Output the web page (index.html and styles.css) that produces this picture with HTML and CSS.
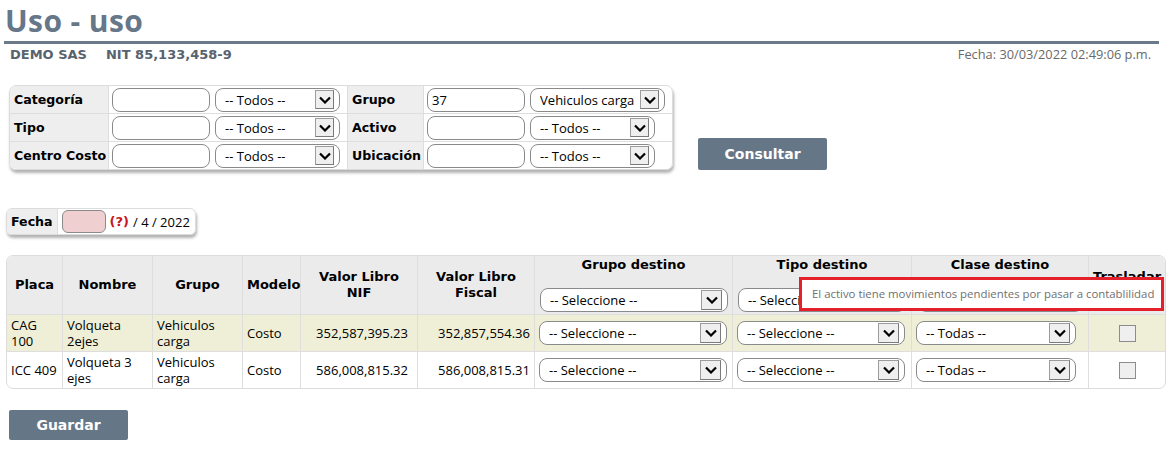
FILE: index.html
```html
<!DOCTYPE html>
<html lang="es">
<head>
<meta charset="utf-8">
<title>Uso - uso</title>
<link rel="stylesheet" href="styles.css">
</head>
<body>
<div class="page">
  <header class="head">
    <h1 class="title">Uso - uso</h1>
  </header>
  <div class="sub">
    <span class="company">DEMO SAS</span>
    <span class="nit">NIT 85,133,458-9</span>
    <span class="date">Fecha: 30/03/2022 02:49:06 p.m.</span>
  </div>

  <section class="filters">
    <table class="filter-box">
      <tr>
        <td class="lbl first">Categoría</td>
        <td class="fld"><div class="fld-in"><span class="txt"></span><span class="sel w125"><span class="val">-- Todos --</span><span class="arr"><svg viewBox="0 0 12 8" width="12" height="8"><path d="M1 1.5 L6 6.5 L11 1.5" fill="none" stroke="#000" stroke-width="2.2"/></svg></span></span></div></td>
        <td class="lbl second">Grupo</td>
        <td class="fld"><div class="fld-in"><span class="txt">37</span><span class="sel w135"><span class="val">Vehiculos carga</span><span class="arr"><svg viewBox="0 0 12 8" width="12" height="8"><path d="M1 1.5 L6 6.5 L11 1.5" fill="none" stroke="#000" stroke-width="2.2"/></svg></span></span></div></td>
      </tr>
      <tr>
        <td class="lbl first">Tipo</td>
        <td class="fld"><div class="fld-in"><span class="txt"></span><span class="sel w125"><span class="val">-- Todos --</span><span class="arr"><svg viewBox="0 0 12 8" width="12" height="8"><path d="M1 1.5 L6 6.5 L11 1.5" fill="none" stroke="#000" stroke-width="2.2"/></svg></span></span></div></td>
        <td class="lbl second">Activo</td>
        <td class="fld"><div class="fld-in"><span class="txt"></span><span class="sel w125"><span class="val">-- Todos --</span><span class="arr"><svg viewBox="0 0 12 8" width="12" height="8"><path d="M1 1.5 L6 6.5 L11 1.5" fill="none" stroke="#000" stroke-width="2.2"/></svg></span></span></div></td>
      </tr>
      <tr>
        <td class="lbl first">Centro Costo</td>
        <td class="fld"><div class="fld-in"><span class="txt"></span><span class="sel w125"><span class="val">-- Todos --</span><span class="arr"><svg viewBox="0 0 12 8" width="12" height="8"><path d="M1 1.5 L6 6.5 L11 1.5" fill="none" stroke="#000" stroke-width="2.2"/></svg></span></span></div></td>
        <td class="lbl second">Ubicación</td>
        <td class="fld"><div class="fld-in"><span class="txt"></span><span class="sel w125"><span class="val">-- Todos --</span><span class="arr"><svg viewBox="0 0 12 8" width="12" height="8"><path d="M1 1.5 L6 6.5 L11 1.5" fill="none" stroke="#000" stroke-width="2.2"/></svg></span></span></div></td>
      </tr>
    </table>
    <button class="btn consult" type="button">Consultar</button>
  </section>

  <div class="fecha-box">
    <span class="fecha-lbl">Fecha</span>
    <span class="day"></span>
    <span class="q">(?)</span>
    <span class="rest">/ 4 / 2022</span>
  </div>

  <div class="grid-wrap">
    <table class="grid">
      <colgroup>
        <col class="c-placa"><col class="c-nombre"><col class="c-grupo"><col class="c-modelo"><col class="c-nif"><col class="c-fiscal"><col class="c-gdest"><col class="c-tdest"><col class="c-cdest"><col class="c-tras">
      </colgroup>
      <thead>
        <tr class="hrow">
          <th>Placa</th>
          <th>Nombre</th>
          <th>Grupo</th>
          <th>Modelo</th>
          <th>Valor Libro<br>NIF</th>
          <th>Valor Libro<br>Fiscal</th>
          <th class="dest"><div class="th-title">Grupo destino</div><span class="sel big w188"><span class="val">-- Seleccione --</span><span class="arr"><svg viewBox="0 0 12 8" width="12" height="8"><path d="M1 1.5 L6 6.5 L11 1.5" fill="none" stroke="#000" stroke-width="2.2"/></svg></span></span></th>
          <th class="dest"><div class="th-title">Tipo destino</div><span class="sel big w168"><span class="val">-- Seleccione --</span><span class="arr"><svg viewBox="0 0 12 8" width="12" height="8"><path d="M1 1.5 L6 6.5 L11 1.5" fill="none" stroke="#000" stroke-width="2.2"/></svg></span></span></th>
          <th class="dest"><div class="th-title">Clase destino</div><span class="sel big w165"><span class="val">-- Todas --</span><span class="arr"><svg viewBox="0 0 12 8" width="12" height="8"><path d="M1 1.5 L6 6.5 L11 1.5" fill="none" stroke="#000" stroke-width="2.2"/></svg></span></span></th>
          <th class="tras"><div class="th-title">Trasladar</div><span class="cb"></span></th>
        </tr>
      </thead>
      <tbody>
        <tr class="hl">
          <td>CAG 100</td>
          <td>Volqueta 2ejes</td>
          <td>Vehiculos carga</td>
          <td>Costo</td>
          <td class="num nif">352,587,395.23</td>
          <td class="num">352,857,554.36</td>
          <td class="selcell"><span class="sel big w188"><span class="val">-- Seleccione --</span><span class="arr"><svg viewBox="0 0 12 8" width="12" height="8"><path d="M1 1.5 L6 6.5 L11 1.5" fill="none" stroke="#000" stroke-width="2.2"/></svg></span></span></td>
          <td class="selcell"><span class="sel big w168"><span class="val">-- Seleccione --</span><span class="arr"><svg viewBox="0 0 12 8" width="12" height="8"><path d="M1 1.5 L6 6.5 L11 1.5" fill="none" stroke="#000" stroke-width="2.2"/></svg></span></span></td>
          <td class="selcell"><span class="sel big w160"><span class="val">-- Todas --</span><span class="arr"><svg viewBox="0 0 12 8" width="12" height="8"><path d="M1 1.5 L6 6.5 L11 1.5" fill="none" stroke="#000" stroke-width="2.2"/></svg></span></span></td>
          <td class="chk"><span class="cb"></span></td>
        </tr>
        <tr>
          <td>ICC 409</td>
          <td>Volqueta 3 ejes</td>
          <td>Vehiculos carga</td>
          <td>Costo</td>
          <td class="num nif">586,008,815.32</td>
          <td class="num">586,008,815.31</td>
          <td class="selcell"><span class="sel big w188"><span class="val">-- Seleccione --</span><span class="arr"><svg viewBox="0 0 12 8" width="12" height="8"><path d="M1 1.5 L6 6.5 L11 1.5" fill="none" stroke="#000" stroke-width="2.2"/></svg></span></span></td>
          <td class="selcell"><span class="sel big w168"><span class="val">-- Seleccione --</span><span class="arr"><svg viewBox="0 0 12 8" width="12" height="8"><path d="M1 1.5 L6 6.5 L11 1.5" fill="none" stroke="#000" stroke-width="2.2"/></svg></span></span></td>
          <td class="selcell"><span class="sel big w160"><span class="val">-- Todas --</span><span class="arr"><svg viewBox="0 0 12 8" width="12" height="8"><path d="M1 1.5 L6 6.5 L11 1.5" fill="none" stroke="#000" stroke-width="2.2"/></svg></span></span></td>
          <td class="chk"><span class="cb"></span></td>
        </tr>
      </tbody>
    </table>
    <div class="tooltip">El activo tiene movimientos pendientes por pasar a contablilidad</div>
  </div>

  <button class="btn save" type="button">Guardar</button>
</div>
</body>
</html>
```
FILE: styles.css
```css
* { box-sizing: border-box; }

body {
  margin: 0;
  background: #fff;
  color: #000;
  font-family: "Open Sans", "Liberation Sans", sans-serif;
  font-size: 13px;
}

.page {
  width: 1173px;
}

/* ---------- header ---------- */
.head {
  margin: 0 14px 0 4px;
  border-bottom: 3px solid #6b7a89;
}

.title {
  margin: 0;
  padding: 0 0 0 1px;
  font-family: "Open Sans", sans-serif;
  font-weight: bold;
  font-size: 30px;
  letter-spacing: 0.4px;
  line-height: 41px;
  color: #66778a;
}

.sub {
  display: flex;
  align-items: baseline;
  padding: 2px 22px 0 10px;
  line-height: 17px;
}

.company,
.nit {
  font-family: "DejaVu Sans", sans-serif;
  font-weight: bold;
  font-size: 13px;
  color: #58636e;
}

.nit { margin-left: 19px; }

.date {
  margin-left: auto;
  font-size: 12.8px;
  color: #6a6a6a;
}

/* ---------- filters ---------- */
.filters {
  display: flex;
  align-items: flex-end;
  gap: 25px;
  margin: 22px 0 0 9px;
}

.filter-box {
  border-collapse: separate;
  border-spacing: 0;
  border: 1px solid #dcdcdc;
  border-radius: 7px;
  box-shadow: 1px 3px 3px rgba(0, 0, 0, 0.3);
  overflow: hidden;
}

.filter-box td {
  height: 28px;
  padding: 0;
  border-top: 1px solid #dedede;
  vertical-align: middle;
}

.filter-box tr:first-child td { border-top: none; height: 27px; }

.filter-box .lbl {
  background: #eeeeee;
  font-family: "DejaVu Sans", sans-serif;
  font-weight: bold;
  font-size: 12.6px;
  white-space: nowrap;
  padding: 0 2px 0 4px;
}

.filter-box .lbl.first { width: 97px; border-right: 1px solid #dedede; }
.filter-box .lbl.second { width: 77px; border-left: 1px solid #dedede; border-right: 1px solid #dedede; }

.fld-in {
  display: flex;
  align-items: center;
  gap: 5px;
  padding: 0 7px 0 3px;
}

.txt {
  display: inline-flex;
  align-items: center;
  width: 98px;
  height: 24px;
  padding: 0 4px;
  border: 1px solid #8a8a8a;
  border-radius: 8px;
  background: #fff;
  font-size: 13px;
}

/* select look-alike */
.sel {
  display: inline-flex;
  align-items: center;
  height: 24px;
  padding: 0 5px 0 9px;
  border: 1px solid #8a8a8a;
  border-radius: 8px;
  background: #fff;
  font-family: "Open Sans", sans-serif;
  font-weight: normal;
  font-size: 13px;
  text-align: left;
}

.sel .val {
  flex: 1;
  white-space: nowrap;
  overflow: hidden;
}

.sel .arr {
  flex: none;
  display: flex;
  align-items: center;
  justify-content: center;
  width: 19px;
  height: 19px;
  border: 1px solid #7a7a7a;
  border-top-color: #9c9c9c;
  border-left-color: #9c9c9c;
  background: #efefef;
}

.sel.big .arr {
  width: 21px;
  height: 20px;
}

.w125 { width: 125px; }
.w135 { width: 135px; }
.w160 { width: 160px; }
.w165 { width: 165px; }
.w168 { width: 168px; }
.w188 { width: 188px; }

.btn {
  border: none;
  border-radius: 2px;
  background: #657687;
  color: #fff;
  font-family: "DejaVu Sans", sans-serif;
  font-weight: bold;
  font-size: 14px;
  cursor: pointer;
}

.consult {
  width: 129px;
  height: 32px;
  margin-bottom: 0;
}

/* ---------- fecha ---------- */
.fecha-box {
  display: inline-flex;
  align-items: center;
  height: 27px;
  margin: 38px 0 0 6px;
  border: 1px solid #dcdcdc;
  border-radius: 6px;
  box-shadow: 1px 3px 3px rgba(0, 0, 0, 0.3);
  overflow: hidden;
  padding-right: 5px;
}

.fecha-lbl {
  display: flex;
  align-items: center;
  height: 100%;
  padding: 0 4px 0 4px;
  background: #eeeeee;
  border-right: 1px solid #dedede;
  font-family: "DejaVu Sans", sans-serif;
  font-weight: bold;
  font-size: 12.6px;
}

.day {
  width: 44px;
  height: 23px;
  margin-left: 4px;
  border: 1px solid #8a8a8a;
  border-radius: 6px;
  background: #efcfd0;
}

.q {
  margin-left: 4px;
  font-family: "DejaVu Sans", sans-serif;
  font-weight: bold;
  color: #c8141c;
}

.rest { margin-left: 4px; }

/* ---------- grid ---------- */
.grid-wrap {
  position: relative;
  width: 1158px;
  margin: 20px 0 0 6px;
}

.grid {
  width: 1158px;
  table-layout: fixed;
  border-collapse: separate;
  border-spacing: 0;
  border: 1px solid #dcdcdc;
  border-radius: 7px;
  overflow: hidden;
}

.c-placa { width: 56px; }
.c-nombre { width: 90px; }
.c-grupo { width: 90px; }
.c-modelo { width: 58px; }
.c-nif { width: 117px; }
.c-fiscal { width: 117px; }
.c-gdest { width: 198px; }
.c-tdest { width: 179px; }
.c-cdest { width: 177px; }
.c-tras { width: 76px; }

.grid th,
.grid td {
  border-right: 1px solid #dedede;
  border-bottom: 1px solid #dedede;
}

.grid th:last-child,
.grid td:last-child { border-right: none; }

.grid tbody tr:last-child td { border-bottom: none; }

.grid th {
  height: 59px;
  padding: 0 4px;
  background: #ebebeb;
  font-family: "DejaVu Sans", sans-serif;
  font-weight: bold;
  font-size: 13px;
  line-height: 16px;
  text-align: center;
  vertical-align: middle;
}

.grid th.dest {
  vertical-align: top;
  padding: 1px 4px 0 4px;
}

.grid th.dest .sel { margin-top: 15px; }
.grid th.dest:nth-child(7) .sel { margin-left: 1px; }

.grid th.tras .cb { margin-top: 0; }

.th-title { line-height: 16px; }

.grid td {
  height: 36px;
  padding: 2px 4px;
  line-height: 16px;
  vertical-align: middle;
}

.grid tr.hl td { background: #efefd7; }

.grid td.num { text-align: right; padding-right: 4px; }
.grid td.num.nif { padding-right: 9px; }

.grid td.selcell { padding: 0 4px 0 4px; }

.grid td.chk { text-align: center; }

.cb {
  display: inline-block;
  width: 17px;
  height: 17px;
  vertical-align: middle;
  border: 1px solid #8c8c8c;
  background: #efefef;
}

.tooltip {
  position: absolute;
  left: 793px;
  top: 22px;
  width: 365px;
  height: 34px;
  padding: 0 0 0 10px;
  border: 3px solid #e4202a;
  background: #fff;
  color: #707070;
  font-size: 11.4px;
  line-height: 28px;
  white-space: nowrap;
}

.save {
  display: block;
  width: 119px;
  height: 30px;
  margin: 21px 0 0 9px;
}
```
